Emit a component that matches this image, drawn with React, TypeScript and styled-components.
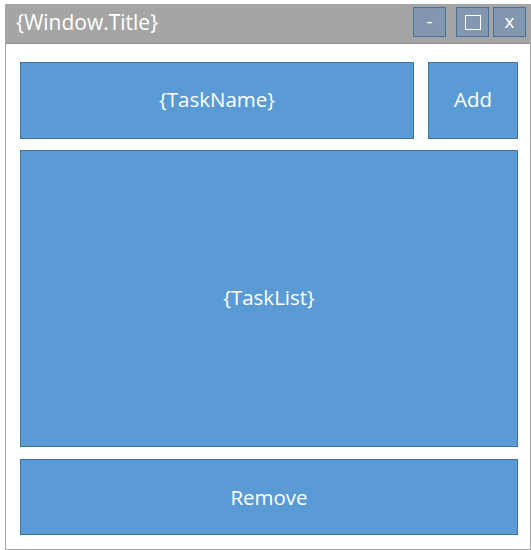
import React from "react";
import styled, { createGlobalStyle } from "styled-components";

const Global = createGlobalStyle`
  html, body { margin: 0; padding: 0; background: #ffffff; }
  body { font-family: "Open Sans", "Noto Sans", sans-serif; }
`;

const Page = styled.div`
  padding: 4px 0 0 5px;
`;

const Window = styled.div`
  width: 524px;
  height: 544px;
  border: 1px solid #a6a6a6;
  display: flex;
  flex-direction: column;
  background: #ffffff;
`;

const TitleBar = styled.div`
  height: 38px;
  background: #a5a5a5;
  border-bottom: 1px solid #8c8c8c;
  display: flex;
  align-items: center;
  padding: 0 4px 0 10px;
  box-sizing: content-box;
`;

const Title = styled.div`
  flex: 1;
  color: #ffffff;
  font-size: 21px;
  line-height: 38px;
  margin-top: -4px;
`;

const Controls = styled.div`
  display: flex;
  align-items: center;
  gap: 10px;
  margin-top: -4px;
`;

const ControlGroup = styled.div`
  display: flex;
  gap: 4px;
`;

const CtrlButton = styled.div`
  width: 31px;
  height: 28px;
  background: #8497b0;
  border: 1px solid #41719c;
  color: #ffffff;
  display: flex;
  align-items: center;
  justify-content: center;
  font-size: 19px;
  padding-bottom: 2px;
  box-sizing: border-box;
  width: 33px;
  height: 30px;
`;

const MaxGlyph = styled.div`
  width: 14px;
  height: 13px;
  margin-top: 2px;
  border: 1.5px solid #ffffff;
`;

const Content = styled.div`
  flex: 1;
  display: flex;
  flex-direction: column;
  padding: 18px 12px 14px 14px;
  gap: 11px;
`;

const TopRow = styled.div`
  display: flex;
  gap: 14px;
  height: 77px;
`;

const Block = styled.div<{ $w?: number; $grow?: boolean }>`
  ${(p) => (p.$w ? `width: ${p.$w}px;` : "")}
  ${(p) => (p.$grow ? "flex: 1;" : "")}
  background: #5b9bd5;
  border: 1px solid #41719c;
  color: #ffffff;
  display: flex;
  align-items: center;
  justify-content: center;
  font-size: 20.5px;
  padding-bottom: 3px;
`;

const BottomBlock = styled(Block)`
  height: 74px;
  flex: none;
  margin-top: 1px;
  box-sizing: content-box;
  padding-bottom: 0;
  padding-top: 0;
  line-height: 70px;
`;

export default function App() {
  return (
    <>
      <Global />
      <Page>
        <Window>
          <TitleBar>
            <Title>{"{Window.Title}"}</Title>
            <Controls>
              <CtrlButton>-</CtrlButton>
              <ControlGroup>
                <CtrlButton>
                  <MaxGlyph />
                </CtrlButton>
                <CtrlButton>x</CtrlButton>
              </ControlGroup>
            </Controls>
          </TitleBar>
          <Content>
            <TopRow>
              <Block $grow>{"{TaskName}"}</Block>
              <Block $w={88}>Add</Block>
            </TopRow>
            <Block $grow>{"{TaskList}"}</Block>
            <BottomBlock>Remove</BottomBlock>
          </Content>
        </Window>
      </Page>
    </>
  );
}
